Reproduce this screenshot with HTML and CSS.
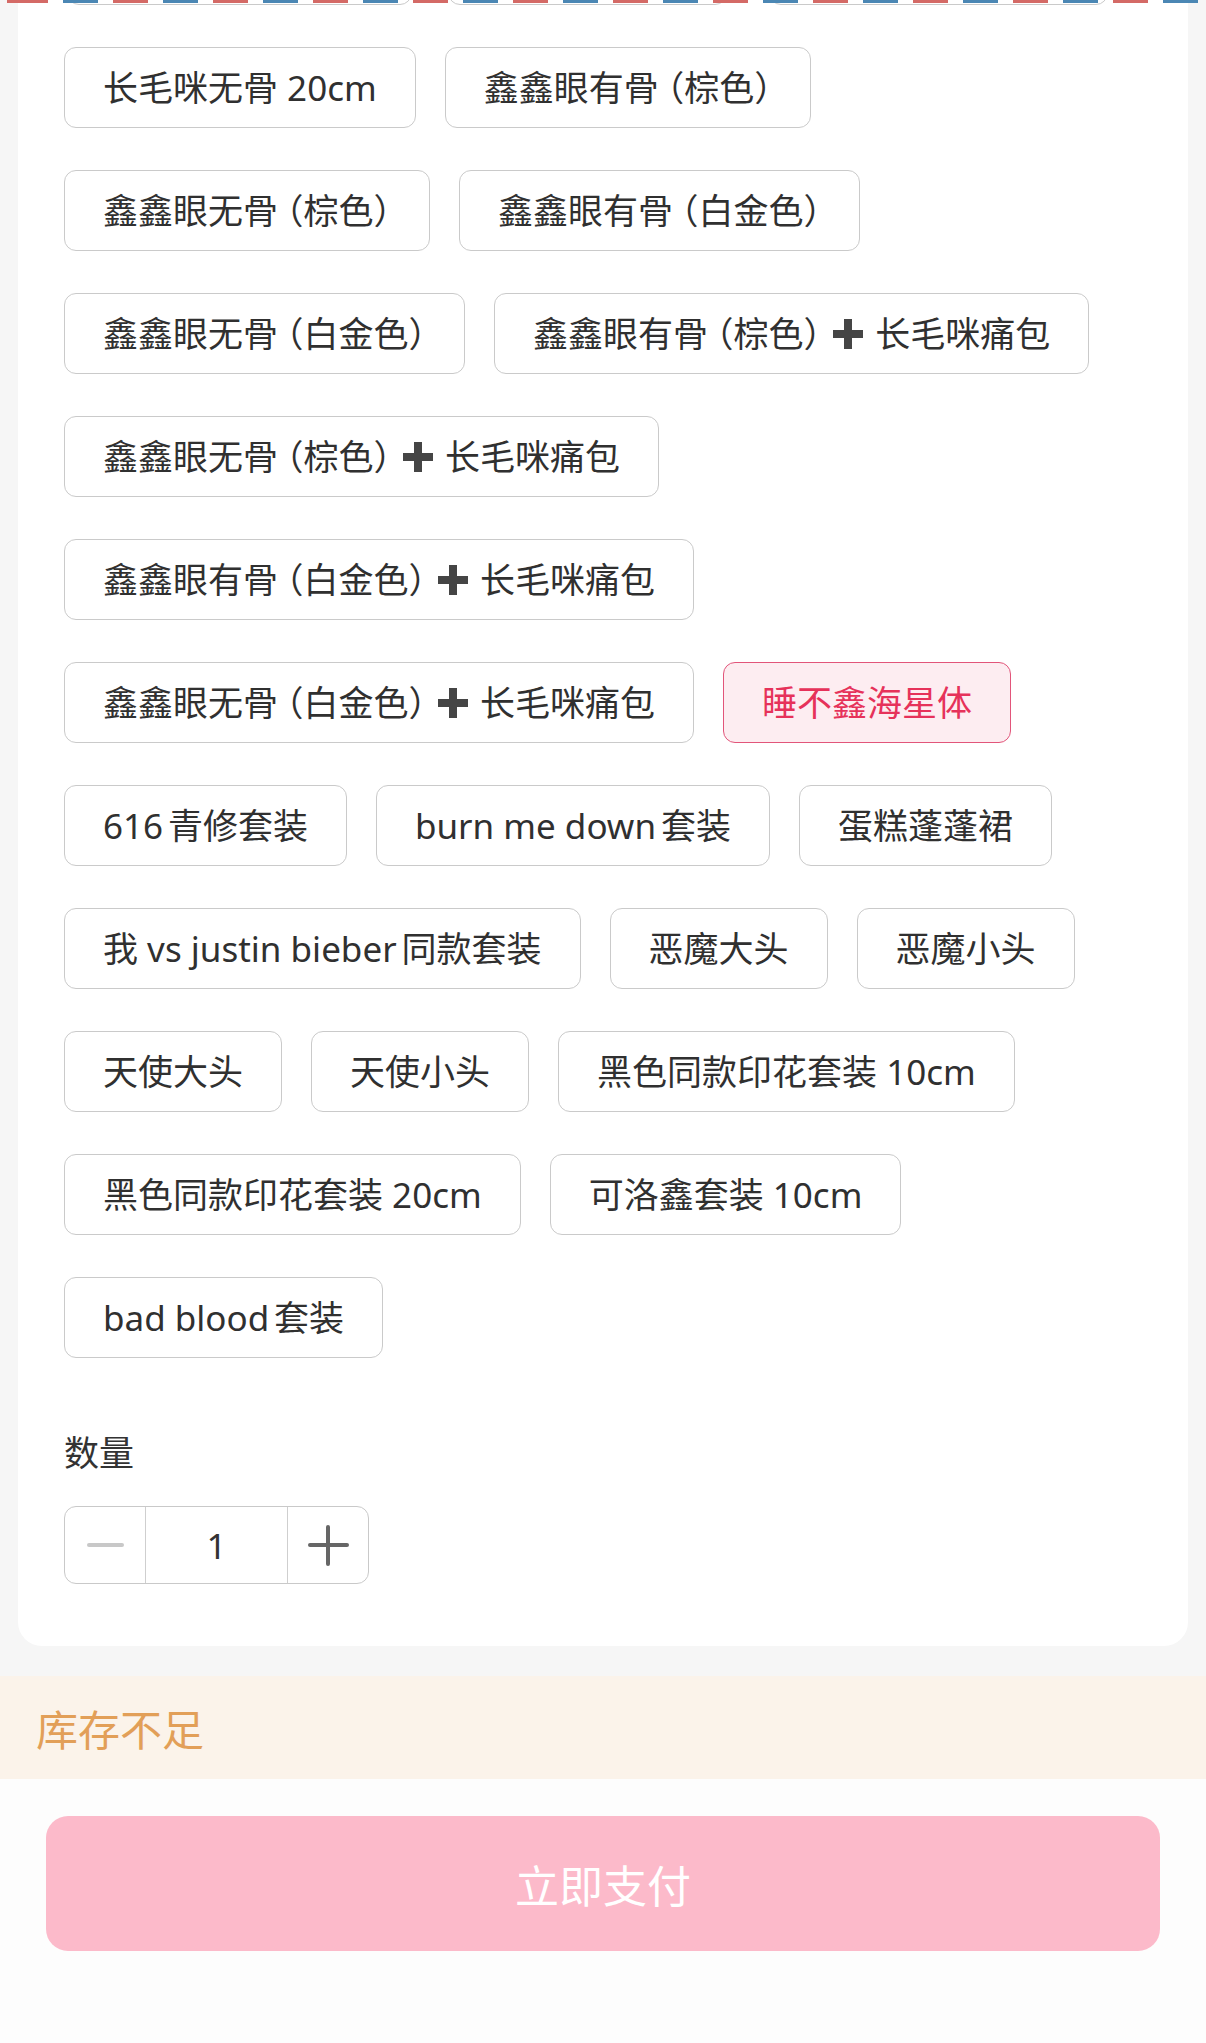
FILE: index.html
```html
<!DOCTYPE html>
<html lang="zh-CN">
<head>
<meta charset="utf-8">
<title>选择规格</title>
<link rel="stylesheet" href="styles.css">
</head>
<body>
<div class="page">
  <div class="airmail"></div>
  <section class="card">
    <div class="prev-row">
      <span class="ghost" style="width:345px"></span>
      <span class="ghost" style="width:279px"></span>
      <span class="ghost" style="width:339px;margin-left:6px"></span>
    </div>
    <div class="options">
      <span class="opt">长毛咪无骨<span class="la">20cm</span></span>
      <span class="opt">鑫鑫眼有骨<span class="pl">（</span>棕色<span class="pr">）</span></span>
      <span class="opt">鑫鑫眼无骨<span class="pl">（</span>棕色<span class="pr">）</span></span>
      <span class="opt">鑫鑫眼有骨<span class="pl">（</span>白金色<span class="pr">）</span></span>
      <span class="opt">鑫鑫眼无骨<span class="pl">（</span>白金色<span class="pr">）</span></span>
      <span class="opt">鑫鑫眼有骨<span class="pl">（</span>棕色<span class="pr">）</span><svg class="plus" viewBox="0 0 32 32" aria-label="➕"><path d="M12 1h8v11h11v8H20v11h-8V20H1v-8h11z"/></svg>长毛咪痛包</span>
      <span class="opt">鑫鑫眼无骨<span class="pl">（</span>棕色<span class="pr">）</span><svg class="plus" viewBox="0 0 32 32" aria-label="➕"><path d="M12 1h8v11h11v8H20v11h-8V20H1v-8h11z"/></svg>长毛咪痛包</span>
      <span class="opt">鑫鑫眼有骨<span class="pl">（</span>白金色<span class="pr">）</span><svg class="plus" viewBox="0 0 32 32" aria-label="➕"><path d="M12 1h8v11h11v8H20v11h-8V20H1v-8h11z"/></svg>长毛咪痛包</span>
      <span class="opt">鑫鑫眼无骨<span class="pl">（</span>白金色<span class="pr">）</span><svg class="plus" viewBox="0 0 32 32" aria-label="➕"><path d="M12 1h8v11h11v8H20v11h-8V20H1v-8h11z"/></svg>长毛咪痛包</span>
      <span class="opt opt-active">睡不鑫海星体</span>
      <span class="opt"><span class="lb">616</span>青修套装</span>
      <span class="opt"><span class="lb">burn me down</span>套装</span>
      <span class="opt">蛋糕蓬蓬裙</span>
      <span class="opt">我<span class="la lb">vs justin bieber</span>同款套装</span>
      <span class="opt">恶魔大头</span>
      <span class="opt">恶魔小头</span>
      <span class="opt">天使大头</span>
      <span class="opt">天使小头</span>
      <span class="opt">黑色同款印花套装<span class="la">10cm</span></span>
      <span class="opt">黑色同款印花套装<span class="la">20cm</span></span>
      <span class="opt">可洛鑫套装<span class="la">10cm</span></span>
      <span class="opt"><span class="lb">bad blood</span>套装</span>
    </div>
    <div class="qty-label">数量</div>
    <div class="stepper">
      <div class="step step-minus"><span class="minus-bar"></span></div>
      <div class="step-value">1</div>
      <div class="step step-plus"><span class="plus-h"></span><span class="plus-v"></span></div>
    </div>
  </section>
  <div class="stock">库存不足</div>
  <div class="footer">
    <div class="pay">立即支付</div>
  </div>
</div>
</body>
</html>
```
FILE: styles.css
```css
html, body {
  margin: 0;
  padding: 0;
}
body {
  width: 1206px;
  height: 2043px;
  overflow: hidden;
  background: #f6f6f6;
  font-family: "Noto Sans", "Noto Sans CJK SC", sans-serif;
  color: #333;
}
.page {
  position: relative;
  width: 1206px;
  height: 2043px;
  overflow: hidden;
  display: flex;
  flex-direction: column;
}
.airmail {
  position: absolute;
  top: 0;
  left: 0;
  right: 0;
  height: 3px;
  z-index: 2;
  background: repeating-linear-gradient(90deg,
    #d46a66 0 35px, transparent 35px 50px,
    #4b87b4 50px 85px, transparent 85px 100px);
  background-position: 13px 0;
}
.card {
  margin: -116px 18px 0;
  padding: 40px 46px 62px;
  background: #fff;
  border-radius: 24px;
}
.prev-row {
  display: flex;
  gap: 36px;
  padding-left: 3px;
  margin-bottom: 42px;
}
.ghost {
  display: block;
  height: 81px;
  box-sizing: border-box;
  border: 1px solid #cacaca;
  border-radius: 12px;
}
.options {
  display: flex;
  flex-wrap: wrap;
  gap: 42px 29px;
}
.opt {
  display: inline-block;
  box-sizing: border-box;
  height: 81px;
  line-height: 79px;
  padding: 0 38px;
  border: 1px solid #cacaca;
  border-radius: 12px;
  font-size: 35px;
  color: #303030;
  white-space: nowrap;
}
.opt-active {
  background: #fdedf1;
  border-color: #e2557a;
  color: #e6325a;
}
.la { margin-left: 0.26em; }
.lb { margin-right: 0.14em; }
.pl, .pr {
  font-feature-settings: "halt" 1;
}
.pl { margin-left: 8px; }
.plus {
  width: 32px;
  height: 32px;
  margin: 0 11px 0 11px;
  vertical-align: -3px;
  fill: #454545;
}
.qty-label {
  margin-top: 70px;
  font-size: 35px;
  line-height: 50px;
  color: #333;
}
.stepper {
  margin-top: 28px;
  display: flex;
  width: 305px;
  height: 78px;
  box-sizing: border-box;
  border: 1px solid #c9c9c9;
  border-radius: 12px;
}
.step {
  position: relative;
  width: 80px;
  display: flex;
  align-items: center;
  justify-content: center;
}
.step-value {
  flex: 1;
  border-left: 1px solid #cfcfcf;
  border-right: 1px solid #cfcfcf;
  display: flex;
  align-items: center;
  justify-content: center;
  font-size: 35px;
  color: #333;
}
.minus-bar {
  width: 37px;
  height: 4px;
  border-radius: 2px;
  background: #c8c8c8;
}
.plus-h {
  width: 41px;
  height: 4px;
  border-radius: 2px;
  background: #666;
}
.plus-v {
  position: absolute;
  width: 4px;
  height: 41px;
  border-radius: 2px;
  background: #666;
}
.stock {
  margin-top: 30px;
  height: 103px;
  display: flex;
  align-items: center;
  padding-left: 36px;
  background: #fbf3ea;
  color: #e29f58;
  font-size: 42px;
}
.footer {
  flex: 1;
  background: #fdfdfd;
  padding: 37px 46px 0;
}
.pay {
  height: 135px;
  border-radius: 22px;
  background: #fcbaca;
  color: #fff;
  font-size: 44px;
  display: flex;
  align-items: center;
  justify-content: center;
}
```
